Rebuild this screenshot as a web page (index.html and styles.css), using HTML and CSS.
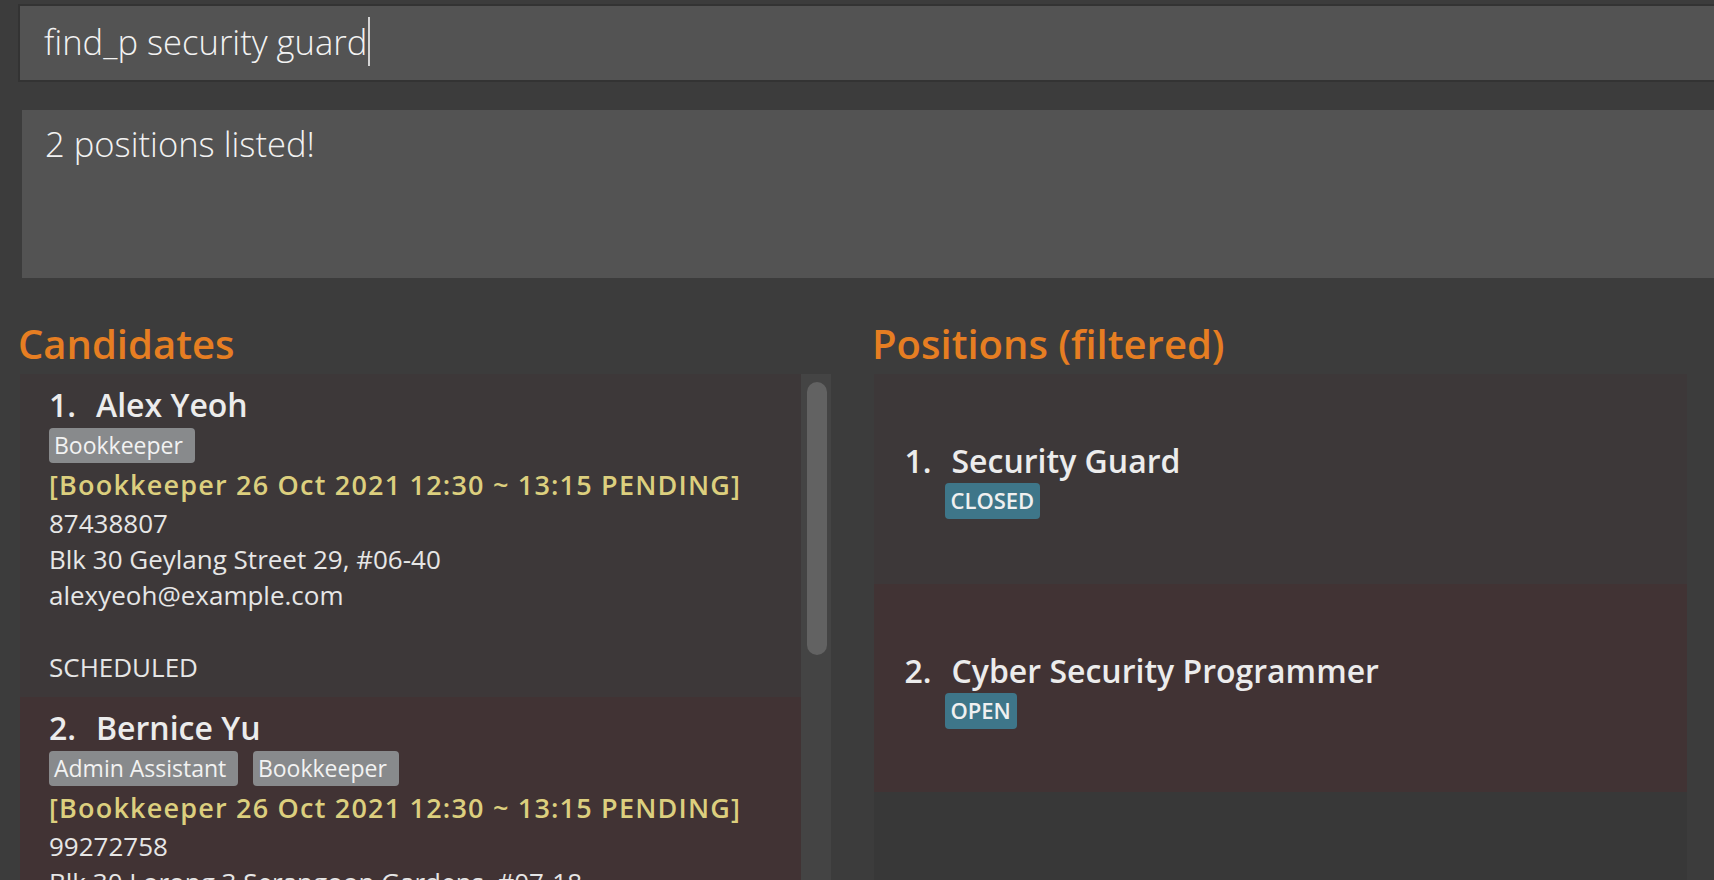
FILE: index.html
```html
<!DOCTYPE html>
<html lang="en">
<head>
<meta charset="utf-8">
<title>Candidates and Positions</title>
<link rel="stylesheet" href="styles.css">
</head>
<body>
<div class="app">
  <div class="command"><span class="cmd-text">find_p security guard</span><span class="caret"></span></div>
  <div class="result">2 positions listed!</div>
  <div class="panels">
    <section class="panel panel-left">
      <h2 class="panel-title">Candidates</h2>
      <div class="list-wrap">
        <div class="list">
          <div class="card card-odd">
            <div class="name-row"><span class="idx">1.</span><span class="name">Alex Yeoh</span></div>
            <div class="tags"><span class="tag">Bookkeeper</span></div>
            <div class="interview">[Bookkeeper 26 Oct 2021 12:30 ~ 13:15 PENDING]</div>
            <div class="info first">87438807</div>
            <div class="info">Blk 30 Geylang Street 29, #06-40</div>
            <div class="info">alexyeoh@example.com</div>
            <div class="info blank"></div>
            <div class="info">SCHEDULED</div>
          </div>
          <div class="card card-even">
            <div class="name-row"><span class="idx">2.</span><span class="name">Bernice Yu</span></div>
            <div class="tags"><span class="tag">Admin Assistant</span><span class="tag">Bookkeeper</span></div>
            <div class="interview">[Bookkeeper 26 Oct 2021 12:30 ~ 13:15 PENDING]</div>
            <div class="info first">99272758</div>
            <div class="info">Blk 30 Lorong 3 Serangoon Gardens, #07-18</div>
            <div class="info">berniceyu@example.com</div>
            <div class="info blank"></div>
            <div class="info">SCHEDULED</div>
          </div>
        </div>
        <div class="scrollbar"><div class="thumb"></div></div>
      </div>
    </section>
    <section class="panel panel-right">
      <h2 class="panel-title">Positions (filtered)</h2>
      <div class="plist">
        <div class="pcard card-odd">
          <div class="name-row"><span class="idx">1.</span><span class="name">Security Guard</span></div>
          <div class="ptags"><span class="ptag">CLOSED</span></div>
        </div>
        <div class="pcard pcard-2 card-even">
          <div class="name-row"><span class="idx">2.</span><span class="name">Cyber Security Programmer</span></div>
          <div class="ptags"><span class="ptag">OPEN</span></div>
        </div>
      </div>
    </section>
  </div>
</div>
</body>
</html>
```

FILE: styles.css
```css
html, body {
  margin: 0;
  padding: 0;
}

body {
  background: #3c3c3c;
  font-family: "Open Sans", "Noto Sans", sans-serif;
  height: 880px;
  overflow: hidden;
}

.app {
  padding-top: 4px;
}

.command {
  margin-left: 18px;
  border: 2px solid #333333;
  border-right: none;
  background: #535353;
  height: 72px;
  padding: 0 0 2px 24px;
  line-height: 72px;
  font-size: 34.6px;
  font-weight: 300;
  color: #f2f2f2;
  white-space: nowrap;
}

.caret {
  display: inline-block;
  width: 2px;
  height: 49px;
  margin-left: 1px;
  background: #d4d4d4;
  vertical-align: -11px;
}

.result {
  margin: 28px 0 0 22px;
  height: 168px;
  box-sizing: border-box;
  padding: 14px 0 0 23px;
  background: #535353;
  font-size: 34.6px;
  font-weight: 300;
  line-height: 40px;
  color: #f2f2f2;
}

.panels {
  display: flex;
  gap: 43px;
  margin-top: 42px;
  padding-left: 20px;
}

.panel {
  flex: none;
}

.panel-left {
  width: 811px;
}

.panel-right {
  width: 813px;
}

.panel-title {
  margin: 0 0 6px -2px;
  font-size: 40px;
  font-weight: 600;
  line-height: 48px;
  color: #e67e22;
}

.list-wrap {
  display: flex;
  height: 506px;
  overflow: hidden;
}

.list {
  width: 781px;
  flex: none;
}

.scrollbar {
  width: 30px;
  flex: none;
  box-sizing: border-box;
  padding: 8px 4px 0 6px;
  background: #444444;
}

.thumb {
  height: 273px;
  background: #626262;
  border-radius: 10px;
}

.card {
  padding: 11px 0 12px 29px;
}

.card-odd {
  background: #3d3839;
}

.card-even {
  background: #413334;
}

.name-row {
  display: flex;
  font-size: 32px;
  font-weight: 600;
  line-height: 40px;
  color: #ececec;
  white-space: nowrap;
}

.idx {
  width: 47px;
  flex: none;
}

.tags {
  display: flex;
  gap: 14.6px;
  margin-top: 2.7px;
}

.tag {
  height: 35.7px;
  line-height: 35.7px;
  padding: 0 12px 0 5px;
  font-size: 23px;
  color: #f2f2f2;
  background: #888a8c;
  border-radius: 4px;
  white-space: nowrap;
}

.interview {
  margin-top: 3.5px;
  font-size: 27px;
  font-weight: 600;
  letter-spacing: 1.2px;
  line-height: 36px;
  color: #dccf7e;
  white-space: nowrap;
}

.info {
  font-size: 26px;
  line-height: 36px;
  color: #e6e6e6;
  white-space: nowrap;
}

.info.first {
  margin-top: 2px;
}

.info.blank {
  height: 36px;
}

.plist {
  height: 506px;
  background: #383838;
}

.pcard {
  height: 210px;
  box-sizing: border-box;
  padding: 66.6px 0 0 30.5px;
}

.pcard-2 {
  height: 208px;
}

.ptags {
  display: flex;
  margin: 2.7px 0 0 40px;
}

.ptag {
  height: 35.7px;
  line-height: 35.7px;
  padding: 0 6px;
  font-size: 22px;
  font-weight: 600;
  color: #f0f0f0;
  background: #3e7689;
  border-radius: 4px;
}
```
